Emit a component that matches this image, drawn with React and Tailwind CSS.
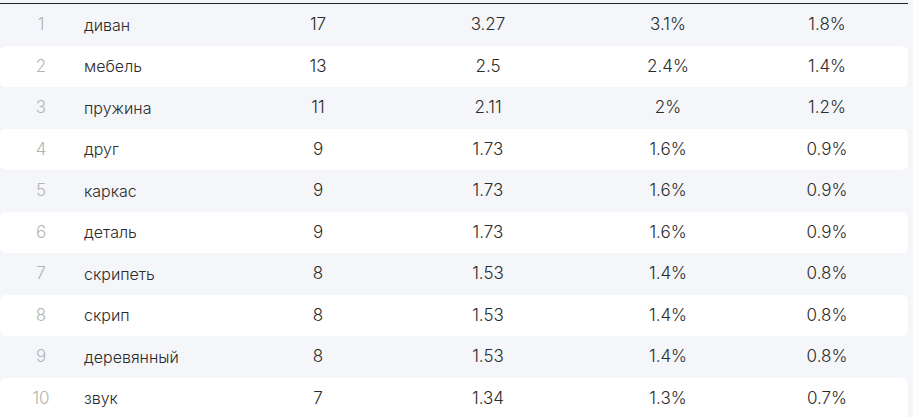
const rows = [
  ['1', 'диван', '17', '3.27', '3.1%', '1.8%'],
  ['2', 'мебель', '13', '2.5', '2.4%', '1.4%'],
  ['3', 'пружина', '11', '2.11', '2%', '1.2%'],
  ['4', 'друг', '9', '1.73', '1.6%', '0.9%'],
  ['5', 'каркас', '9', '1.73', '1.6%', '0.9%'],
  ['6', 'деталь', '9', '1.73', '1.6%', '0.9%'],
  ['7', 'скрипеть', '8', '1.53', '1.4%', '0.8%'],
  ['8', 'скрип', '8', '1.53', '1.4%', '0.8%'],
  ['9', 'деревянный', '8', '1.53', '1.4%', '0.8%'],
  ['10', 'звук', '7', '1.34', '1.3%', '0.7%'],
];

const App = () => {
  return (
    <div className="h-[417px] w-[913px] overflow-hidden bg-[#f4f6fa] pt-[3px] font-['Inter',sans-serif] text-[16px] text-[#2b2b2b]">
      <div className="w-[908px]">
        <div className="h-px bg-[#222]" />
        {rows.map((r, i) => (
          <div
            key={r[0]}
            className={`grid h-[41.5px] grid-cols-[82px_152px_168px_172px_188px_130px] items-center ${i % 2 === 1 ? 'rounded-md bg-white' : ''}`}
          >
            <span className="text-center text-[17px] font-light text-[#b4b4b4]">{r[0]}</span>
            <span className="pl-[2px] font-[350]">{r[1]}</span>
            <span className="text-center text-[17px] font-light">{r[2]}</span>
            <span className="text-center text-[17px] font-light">{r[3]}</span>
            <span className="text-center text-[17px] font-light">{r[4]}</span>
            <span className="text-center text-[17px] font-light">{r[5]}</span>
          </div>
        ))}
      </div>
    </div>
  );
};

export default App;
